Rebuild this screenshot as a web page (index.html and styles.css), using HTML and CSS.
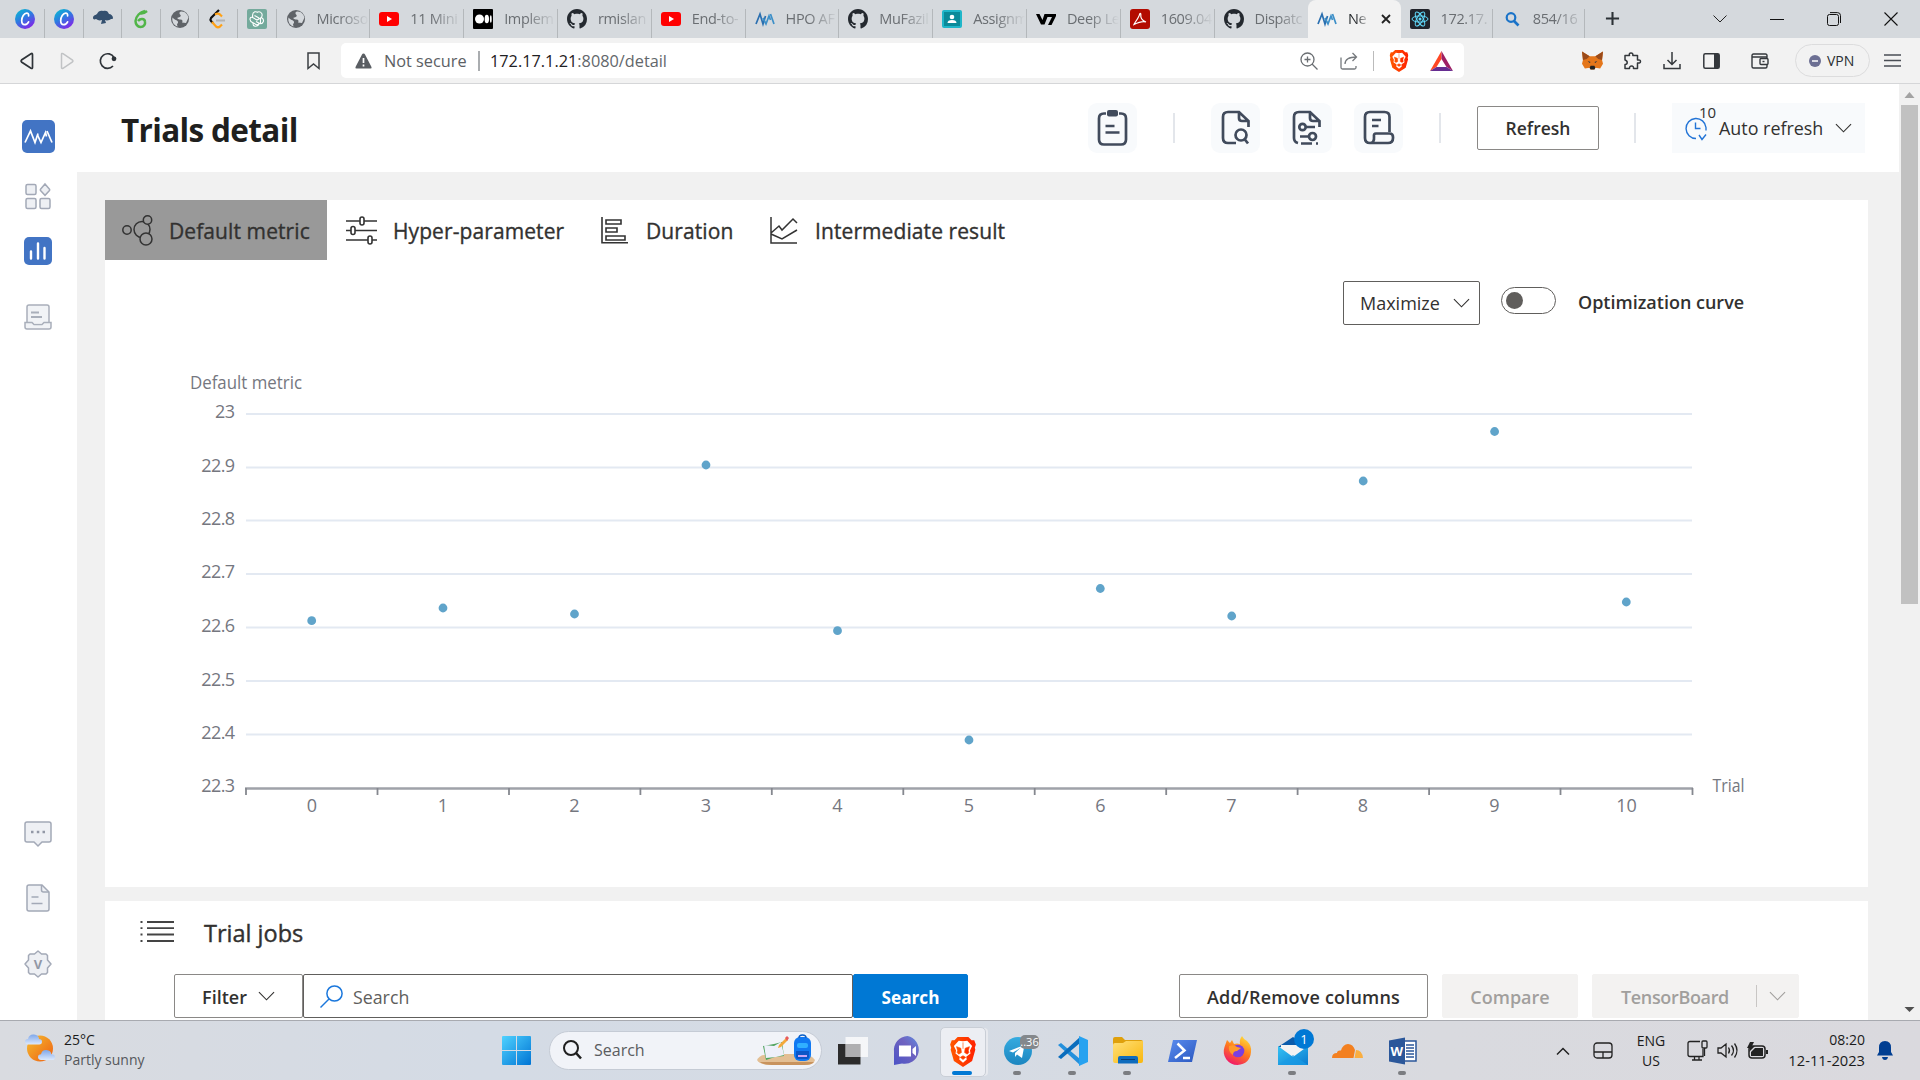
FILE: index.html
```html
<!DOCTYPE html>
<html lang="en">
<head>
<meta charset="utf-8">
<title>Neural Network Intelligence</title>
<link rel="stylesheet" href="styles.css">
</head>
<body>
<svg class="defs" aria-hidden="true">
  <defs>
    <linearGradient id="gCanva" x1="0" y1="0" x2="0.6" y2="1"><stop offset="0" stop-color="#05c3cf"/><stop offset=".5" stop-color="#2b7fe0"/><stop offset="1" stop-color="#7d2ae8"/></linearGradient>
    <linearGradient id="gWin" x1="0" y1="0" x2="1" y2="1"><stop offset="0" stop-color="#4fd2ff"/><stop offset="1" stop-color="#0074d4"/></linearGradient>
    <linearGradient id="gBrave" x1="0" x2="1"><stop offset="0" stop-color="#ff5a00"/><stop offset="1" stop-color="#ff2000"/></linearGradient>
    <linearGradient id="gSun" x1="0" y1="0" x2="1" y2="1"><stop offset="0" stop-color="#f5bd2f"/><stop offset="1" stop-color="#ee5f12"/></linearGradient>
    <linearGradient id="gCloud" x1="0" y1="0" x2="0" y2="1"><stop offset="0" stop-color="#7fa7ea"/><stop offset="1" stop-color="#dce9fd"/></linearGradient>
    <linearGradient id="gFox" x1="0.8" y1="0" x2="0.3" y2="1"><stop offset="0" stop-color="#ffe03b"/><stop offset=".5" stop-color="#ff7a1c"/><stop offset="1" stop-color="#f0156b"/></linearGradient>
    <linearGradient id="gTeams" x1="0" y1="1" x2="1" y2="0"><stop offset="0" stop-color="#4b53c6"/><stop offset=".6" stop-color="#6f63c0"/><stop offset="1" stop-color="#5f8be0"/></linearGradient>
    <linearGradient id="gMail" x1="0" y1="0" x2="1" y2="1"><stop offset="0" stop-color="#35c3f5"/><stop offset="1" stop-color="#0a7bd0"/></linearGradient>
    <linearGradient id="gFolder" x1="0" y1="0" x2="1" y2="1"><stop offset="0" stop-color="#ffe07a"/><stop offset="1" stop-color="#f9b70d"/></linearGradient>
    <linearGradient id="gPs" x1="0" y1="0" x2="1" y2="1"><stop offset="0" stop-color="#5b8def"/><stop offset="1" stop-color="#2a58c0"/></linearGradient>
    <linearGradient id="gTg" x1="0" y1="0" x2="0" y2="1"><stop offset="0" stop-color="#35abe0"/><stop offset="1" stop-color="#1c86c0"/></linearGradient>
    <symbol id="canva" viewBox="0 0 20 20"><circle cx="10" cy="10" r="10" fill="url(#gCanva)"/><path d="M13.6 6.8c.2-1.8-.6-2.7-1.9-2.7-2.600 0-5 4-5 7.500 0 2.600 1.200 4.100 2.900 4.100 1.800 0 3.200-1.300 4-2.900" fill="none" stroke="#fff" stroke-width="1.700" stroke-linecap="round"/></symbol>
    <symbol id="globe" viewBox="0 0 20 20"><circle cx="10" cy="10" r="9" fill="#5f6368"/><path d="M11 2.500c-2 .5-2 2.500-.5 3.500 1 1-1 2.500-2.500 2.500-1.500.5 0 2 2.500 2 2 0 2.500 1.500 1.500 3l4 .5 2.300-5C18.500 6 15 2 11 2.500zM2.500 8.500c1.500 2 4 2.500 5 3.500s.5 2.500-.5 3l.5 2.500C4 16.500 1.500 12.500 2.500 8.500z" fill="#d5d9dd"/></symbol>
    <symbol id="gh" viewBox="0 0 16 16"><path fill="#24292f" d="M8 0C3.580 0 0 3.580 0 8c0 3.540 2.290 6.530 5.470 7.590.4.070.55-.17.55-.38 0-.19-.01-.82-.01-1.490-2.010.37-2.530-.49-2.690-.94-.09-.23-.48-.94-.82-1.130-.28-.15-.68-.52-.01-.53.63-.01 1.080.58 1.230.82.72 1.210 1.870.87 2.330.66.070-.52.28-.87.51-1.070-1.780-.2-3.640-.89-3.640-3.950 0-.87.31-1.590.82-2.150-.08-.2-.36-1.020.08-2.120 0 0 .67-.21 2.200.82.64-.18 1.320-.27 2-.27s1.360.09 2 .27c1.530-1.040 2.200-.82 2.200-.82.44 1.100.16 1.920.08 2.120.51.56.82 1.270.82 2.150 0 3.070-1.870 3.750-3.650 3.950.29.25.54.73.54 1.480 0 1.070-.01 1.930-.01 2.200 0 .21.15.46.55.38A8.010 8.010 0 0016 8c0-4.420-3.580-8-8-8z"/></symbol>
    <symbol id="yt" viewBox="0 0 20 20"><rect y="3" width="20" height="14" rx="3" fill="#f00"/><path d="M8 7v6l5-3z" fill="#fff"/></symbol>
    <symbol id="nni" viewBox="0 0 20 20"><path d="M1 15 5 5l3 10 2.500-8" fill="none" stroke="#2a6fb0" stroke-width="1.700"/><path d="m8 9 3 6 3-8 1.500 4M15.500 5 19 15" fill="none" stroke="#3c8fc8" stroke-width="1.700"/></symbol>
    <symbol id="chev" viewBox="0 0 18 10"><path d="m1 1 8 8 8-8" fill="none" stroke="currentColor" stroke-width="1.200"/></symbol>
    <symbol id="lion" viewBox="0 0 24 28"><path d="M7 0h10l3 3 2.500 0L24 7l-1 3 .500 2-3 10.500L12 28l-8.500-5.500L.500 12 1 10 0 7l1.500-4H4z" fill="url(#gBrave)"/><path d="m12 4 4-.5 4.500 5-2 4 .5 3-4 3 .500 2.500L12 24l-3.500-3L9 18.500l-4-3 .500-3-2-4L8 3.500z" fill="#fff"/><path d="m6 9 4 1.500.5 4L8 16l-1.500-1.500.5-2zM18 9l-4 1.500-.5 4L16 16l1.500-1.500-.500-2zM12 5v6M9.500 19l2.500-1.500 2.500 1.500L12 21z" fill="url(#gBrave)" stroke="#ff4a00" stroke-width=".6"/></symbol>
  </defs>
</svg>

<header class="tabstrip">
  <div class="tab first"><svg class="fav"><use href="#canva"/></svg></div>
  <div class="tab mini"><svg class="fav"><use href="#canva"/></svg></div>
  <div class="tab mini"><svg class="fav" viewBox="0 0 20 20"><path d="M0 9c0-3 3-3 4-4 1-3 4-4 6-3 3-1 5 0 6 3 2 0 4 2 4 4 0 1-1 1-2 1-1 1-4 2-6 1l1 3-5 1 1-4c-3 1-4 0-6-1-2 1-3 0-3-1z" fill="#34506f"/></svg></div>
  <div class="tab mini"><svg class="fav" viewBox="0 0 20 20"><path d="M14 2C9 3 5 7 4.500 12c0 3 2 6 5 6 3.500 0 5-3 4.500-5.500-.5-3-4.500-3.500-7-.5M8 4c2 1 5 .5 8-2" fill="none" stroke="#51b548" stroke-width="2.500"/></svg></div>
  <div class="tab mini"><svg class="fav"><use href="#globe"/></svg></div>
  <div class="tab mini"><svg class="fav" viewBox="0 0 20 20"><path d="m11 1-8 8q-1 1.500 0 3l2 2" fill="none" stroke="#111" stroke-width="2.200"/><path d="m4 13 4 4.500q2 1.500 4 0l2-2M7 5.500l1-.5q2-1 4 .5l2 2" fill="none" stroke="#ffa116" stroke-width="2.200"/><path d="M8 11.500h9" stroke="#b3b3b3" stroke-width="2"/></svg></div>
  <div class="tab mini"><svg class="fav" viewBox="0 0 20 20"><rect width="20" height="20" rx="2" fill="#74aa9c"/><g fill="none" stroke="#fff" stroke-width="1.100"><path d="M10 3.200q3-1.200 4.600 1 1.200 2-.2 4.300L10 11 5.600 8.500V6q0-2.400 2.200-3.200 1.700-.4 3 .8M14.400 8.500q2.600 1.500 2 4-.8 2.300-3.300 2.300L9 12.500M5.600 8.500Q3 7.500 3 10.500q.2 2 2.500 3l4.500 2.500 3.500-2V9.500M6 13.500q-.5 3 2 3.700 2.500.3 3.800-1.500M7.500 6.500 12 9"/></g></svg></div>
  <div class="tab"><svg class="fav"><use href="#globe"/></svg><span>Microso</span></div>
  <div class="tab"><svg class="fav"><use href="#yt"/></svg><span>11 Mini</span></div>
  <div class="tab"><svg class="fav" viewBox="0 0 20 20"><rect width="20" height="20" rx="1"/><circle cx="6.500" cy="10" r="4.500" fill="#fff"/><ellipse cx="13.800" cy="10" rx="2.200" ry="4.300" fill="#fff"/><ellipse cx="17.800" cy="10" rx=".9" ry="3.800" fill="#fff"/></svg><span>Implem</span></div>
  <div class="tab"><svg class="fav"><use href="#gh"/></svg><span>rmislan</span></div>
  <div class="tab"><svg class="fav"><use href="#yt"/></svg><span>End-to-</span></div>
  <div class="tab"><svg class="fav"><use href="#nni"/></svg><span>HPO AF</span></div>
  <div class="tab"><svg class="fav"><use href="#gh"/></svg><span>MuFazil</span></div>
  <div class="tab"><svg class="fav" viewBox="0 0 20 20"><rect y="1" width="20" height="18" rx="2" fill="#1fb6c9"/><rect x="2" y="3" width="16" height="14" fill="#0b8a99"/><circle cx="10" cy="8" r="2.300" fill="#fff"/><path d="M5.500 14q0-3 4.500-3t4.500 3z" fill="#fff"/></svg><span>Assignm</span></div>
  <div class="tab"><svg class="fav" viewBox="0 0 20 20"><path d="M0 5h3.500l3 6 2-6H20v2l-4.500 9H12l4-8h-4.500l-3 7.500H5z"/></svg><span>Deep Le</span></div>
  <div class="tab"><svg class="fav" viewBox="0 0 20 20"><rect width="20" height="20" rx="3" fill="#b30b00"/><path d="M4 15.500c1-2.500 5-7 5.500-10 .2-1.500 1.500-1.500 1.300 0-.5 4 2.500 6.500 5.200 7.500-3-1-8 .5-12 2.500z" fill="none" stroke="#fff" stroke-width="1.200"/></svg><span>1609.04</span></div>
  <div class="tab nosep"><svg class="fav"><use href="#gh"/></svg><span>Dispatc</span></div>
  <div class="tab active"><svg class="fav"><use href="#nni"/></svg><span>Ne</span><svg class="tab-x" viewBox="0 0 10 10"><path d="m1 1 8 8M9 1 1 9" stroke="#222" stroke-width="1.800"/></svg></div>
  <div class="tab late"><svg class="fav" viewBox="0 0 20 20"><rect width="20" height="20" rx="2" fill="#20232a"/><g fill="none" stroke="#61dafb" stroke-width="1"><ellipse cx="10" cy="10" rx="8" ry="3.100"/><ellipse cx="10" cy="10" rx="8" ry="3.100" transform="rotate(60 10 10)"/><ellipse cx="10" cy="10" rx="8" ry="3.100" transform="rotate(120 10 10)"/></g><circle cx="10" cy="10" r="1.500" fill="#61dafb"/></svg><span>172.17.</span></div>
  <div class="tab late"><svg class="fav" viewBox="0 0 20 20"><circle cx="9" cy="8.500" r="4.300" fill="none" stroke="#1a73c8" stroke-width="2.200"/><path d="m12 12 4.500 4.500" stroke="#1a73c8" stroke-width="2.600"/></svg><span>854/16</span></div>
  <svg class="plus" viewBox="0 0 16 16"><path d="M8 1v14M1 8h14" stroke="#2c3236" stroke-width="2.200"/></svg>
  <div class="wincontrols">
    <svg width="14" height="8" viewBox="0 0 14 8"><path d="m.5.5 6.500 6.500L13.500.5" fill="none" stroke="#222"/></svg>
    <svg width="14" height="14" viewBox="0 0 14 14"><path d="M0 7.500h14" stroke="#111"/></svg>
    <svg width="14" height="14" viewBox="0 0 14 14"><rect x=".5" y="2.500" width="11" height="11" rx="2" fill="none" stroke="#111"/><path d="M3 .6h7.500q3 0 3 3V11" fill="none" stroke="#111"/></svg>
    <svg width="14" height="14" viewBox="0 0 14 14"><path d="m.5.5 13 13m0-13-13 13" stroke="#111" stroke-width="1.100"/></svg>
  </div>
</header>

<div class="toolbar">
  <svg class="back" width="14" height="18" viewBox="0 0 14 18"><path d="M12.500 2.500v13q0 1.500-1.500.8L1.500 10q-1-1 0-2L11 1.700q1.500-.8 1.500.8z" fill="none" stroke="#2f3439" stroke-width="1.700"/></svg>
  <svg class="fwd" width="14" height="18" viewBox="0 0 14 18"><path d="M1.500 2.500v13q0 1.500 1.500.8l9.500-6.300q1-1 0-2L3 1.700q-1.500-.8-1.500.8z" fill="none" stroke="#c1c3c5" stroke-width="1.500"/></svg>
  <svg class="reload" width="18" height="18" viewBox="0 0 18 18"><path d="M14 14A7.300 7.300 0 1 1 15 5.500" fill="none" stroke="#2f3439" stroke-width="1.700"/><circle cx="15" cy="6.800" r="2.400" fill="#2f3439"/></svg>
  <svg class="bookmark" width="13" height="18" viewBox="0 0 13 18"><path d="M1 1h11v15.500L6.500 12 1 16.500z" fill="none" stroke="#3b3f43" stroke-width="1.500"/></svg>
  <div class="urlbar">
    <svg class="warn" width="17" height="16" viewBox="0 0 17 16"><path d="M8.500.5q1 0 1.500 1L16.500 14q.5 1.500-1 1.500h-14q-1.500 0-1-1.500L7 1.500q.5-1 1.500-1z" fill="#5a5e63"/><path d="M8.500 5v5M8.500 11.500v2" stroke="#fff" stroke-width="1.700"/></svg>
    <span class="notsec">Not secure</span><i class="urlsep"></i>
    <span class="url"><b>172.17.1.21</b>:8080/detail</span>
    <svg class="zoomi" width="18" height="18" viewBox="0 0 18 18"><g fill="none" stroke="#6a6e72" stroke-width="1.300"><circle cx="7.500" cy="7.500" r="6.500"/><path d="m12 12 5.500 5.500M4.500 7.500h6M7.500 4.500v6"/></g></svg>
    <svg class="share" width="18" height="18" viewBox="0 0 18 18"><g fill="none" stroke="#75797d" stroke-width="1.300"><path d="M1 5.500v10q0 1.500 1.500 1.500h12q1.500 0 1.500-1.500V14M5 12q0-7 11.500-7M12.500 1l4 4-4 4"/></g></svg>
    <i class="vsep"></i>
    <svg class="lion" width="20" height="22" viewBox="0 0 24 28"><use href="#lion"/></svg>
    <svg class="bat" width="23" height="20" viewBox="0 0 23 20"><path d="M11.500 0 0 20l6.500-4 5-8z" fill="#ff4724"/><path d="m11.500 0 11.500 20-6.500-4-5-8z" fill="#9e1f63"/><path d="M0 20h23l-6.500-4h-10z" fill="#662d91"/></svg>
  </div>
  <svg class="metamask" width="21" height="19" viewBox="0 0 22 19"><path d="m0 0 8 5h6l8-5-1 9 1 4-3 5-5-1-1 2H9l-1-2-5 1-3-5 1-4z" fill="#e4761b"/><path d="m0 0 8 5-3 3-4 1zM22 0l-8 5 3 3 4 1z" fill="#9a4a1a"/><path d="m8 17 1-2h4l1 2-1 2H9z" fill="#222"/><path d="m6 10 3 1-1 1zM16 10l-3 1 1 1z" fill="#233447"/></svg>
  <svg class="puzzle" width="19" height="18" viewBox="0 0 19 18"><path d="M2 3.500h4.500q-.8-2.500 1.500-2.500t1.800 2.500h4.700V8q3-.5 3 1.500t-3 1.500V16.500h-4q.3-2.500-1.900-2.500T6.500 16.500H2v-4q2.200 0 2.200-2T2 8z" fill="none" stroke="#34383c" stroke-width="1.500" stroke-linejoin="round"/></svg>
  <svg class="dl" width="18" height="18" viewBox="0 0 18 18"><path d="M9 0v12M4.500 8 9 12.500 13.500 8M1 12v4.500h16V12" fill="none" stroke="#34383c" stroke-width="1.500"/></svg>
  <svg class="panel" width="17" height="16" viewBox="0 0 17 16"><rect x=".8" y=".8" width="15.400" height="14.400" rx="1.500" fill="none" stroke="#34383c" stroke-width="1.500"/><path d="M11 1h5v14h-5z" fill="#34383c"/></svg>
  <svg class="wallet" width="18" height="16" viewBox="0 0 18 16"><g fill="none" stroke="#34383c" stroke-width="1.400"><path d="M16 4.500V2.500Q16 1 14.500 1h-12Q1 1 1 2.500v11Q1 15 2.500 15h12q1.500 0 1.500-1.500V12M1 4h14q1 0 1 1"/><rect x="9" y="5.500" width="8" height="6" rx="1"/><path d="M11.500 8.500h2"/></g></svg>
  <div class="vpn"><svg width="12" height="12" viewBox="0 0 12 12"><circle cx="6" cy="6" r="6" fill="#6c6f93"/><path d="M3 6h6" stroke="#fff" stroke-width="1.500"/></svg><span>VPN</span></div>
  <svg class="menu" width="17" height="13" viewBox="0 0 17 13"><path d="M0 1h17M0 6.500h17M0 12h17" stroke="#4a4e55" stroke-width="1.500"/></svg>
</div>

<main class="viewport">
  <nav class="sidebar">
    <svg class="s-logo" width="33" height="33" viewBox="0 0 33 33"><rect width="33" height="33" rx="5" fill="#4274c4"/><path d="m3 22.500 5.500-11.500L13 22.500l3-9" fill="none" stroke="#fff" stroke-width="1.700"/><path d="m15.500 15 3.500 7.500 4.500-10 1 4M25 11l5 11.500" fill="none" stroke="#fff" stroke-width="1.700"/></svg>
    <svg class="s-grid" width="26" height="27" viewBox="0 0 26 27"><g fill="#eef0f4" stroke="#a3a9b7" stroke-width="1.500"><rect x="1" y="1.500" width="10" height="10" rx="1.500"/><rect x="1" y="15.500" width="10" height="10" rx="1.500"/><rect x="15" y="15.500" width="10" height="10" rx="1.500"/><path d="m20 1 4.500 5.300q.5.700 0 1.200L20 12.300 15.500 7.500q-.5-.5 0-1.200z"/></g></svg>
    <svg class="s-bars" width="28" height="28" viewBox="0 0 28 28"><rect width="28" height="28" rx="5" fill="#4274c4"/><path d="M7 14.500v7M14 6.500v15M20.500 11v10.500" stroke="#fff" stroke-width="2.400" stroke-linecap="round"/></svg>
    <svg class="s-inbox" width="28" height="26" viewBox="0 0 28 26"><g fill="#f1f3f6" stroke="#a9afba" stroke-width="1.500"><path d="M3 19V3q0-2 2-2h18q2 0 2 2v16"/><path d="M1 18.500h7l2 2h8l2-2h7V23q0 2-2 2H3q-2 0-2-2z"/><path d="M7 8.500h8M7 13h11" stroke-width="1.800"/></g></svg>
    <svg class="s-chat" width="28" height="26" viewBox="0 0 28 26"><path d="M3 1h22q2 0 2 2v16q0 2-2 2h-7l-4 4-4-4H3q-2 0-2-2V3q0-2 2-2z" fill="#eef0f4" stroke="#a3a9b7" stroke-width="1.500"/><path d="M7 11h2.500M12.800 11h2.500M18.500 11H21" stroke="#9298a6" stroke-width="2.500"/></svg>
    <svg class="s-doc" width="24" height="28" viewBox="0 0 24 28"><path d="M3 1h13l7 7v17q0 2-2 2H3q-2 0-2-2V3q0-2 2-2z" fill="#eef0f4" stroke="#a3a9b7" stroke-width="1.500"/><path d="M15.500 1v5q0 2 2 2H23M5.500 13h7M5.500 19.500h11" fill="none" stroke="#a3a9b7" stroke-width="1.500"/></svg>
    <div class="s-v"><svg width="28" height="28" viewBox="0 0 28 28"><path d="m14 1 3.500 3H22l1.500 1.500V10L27 14l-3.500 4v4.500L22 24h-4.500L14 27l-3.500-3H6l-1.500-1.500V18L1 14l3.500-4V5.500L6 4h4.500z" fill="#eef0f4" stroke="#a3a9b7" stroke-width="1.500" stroke-linejoin="round"/></svg><b>V</b></div>
  </nav>
  <div class="page">
    <div class="pagehead">
      <h1>Trials detail</h1>
      <div class="actions">
        <div class="ibtn"><svg width="32" height="37" viewBox="0 0 32 37"><g fill="none" stroke="#414b5c" stroke-width="2.700"><path d="M9 3.500H7Q2 3.500 2 8.500v21q0 5 5 5h17q5 0 5-5v-21q0-5-5-5h-2"/><path d="M8.500 16h9M8.500 22.500h14"/></g><rect x="10" y="0" width="11" height="6.500" rx="2" fill="#414b5c"/></svg></div>
        <i class="hsep"></i>
        <div class="ibtn"><svg width="30" height="36" viewBox="0 0 30 36"><g fill="none" stroke="#414b5c" stroke-width="2.700"><path d="M15 33H7q-5 0-5-5V7q0-5 5-5h11l9.500 9v6M18 2v6q0 3 3 3h6"/><circle cx="20" cy="25" r="5.500"/><path d="m23.500 29 3.500 4.500"/></g></svg></div>
        <div class="ibtn b2"><svg width="30" height="36" viewBox="0 0 30 36"><g fill="none" stroke="#414b5c" stroke-width="2.700"><path d="M6 33Q2 32 2 28V7q0-5 5-5h11l9.500 9v6M18 2v6q0 3 3 3h6M14 17h9M8 26.500h8"/><circle cx="10.500" cy="17" r="3.200"/><circle cx="20.500" cy="26.500" r="3.500"/><path d="M9 33.500h11M24 33.500h2"/></g></svg></div>
        <div class="ibtn b2"><svg width="32" height="36" viewBox="0 0 32 36"><g fill="none" stroke="#414b5c" stroke-width="2.700"><path d="M26.500 22V7q0-5-5-5H7Q2 2 2 7v21q0 5 5 5h18q5 0 5-5v-1q0-3.500-3.500-3.500H13q-2.500 0-2 3 .500 6.500-4 6.500M9 10h9M9 16h6.500"/></g></svg></div>
        <i class="hsep"></i>
        <div class="btn refresh">Refresh</div>
        <i class="hsep last"></i>
        <div class="auto">
          <svg width="23" height="23" viewBox="0 0 23 23"><path d="M11 21.500A10 10 0 1 1 21 10.500v3M14 18l3 4.500 4-5M10.500 5.500v6h5" fill="none" stroke="#2374d6" stroke-width="1.400"/></svg>
          <em>10</em><span>Auto refresh</span><svg class="chev" width="17" height="10"><use href="#chev"/></svg>
        </div>
      </div>
    </div>

    <section class="card metric">
      <div class="pivot">
        <div class="pv sel"><svg width="31" height="31" viewBox="0 0 31 31"><g fill="none" stroke="#333" stroke-width="1.500"><circle cx="5" cy="15" r="4.200"/><circle cx="20" cy="14.500" r="8"/><circle cx="25.500" cy="5" r="4.200" fill="#999"/><circle cx="24" cy="24" r="6" fill="#999"/></g></svg><span>Default metric</span></div>
        <div class="pv p2"><svg width="31" height="29" viewBox="0 0 31 29"><g fill="#fff" stroke="#333" stroke-width="1.600"><path d="M0 5h31M0 14.500h31M0 24h31"/><rect x="14" y="1" width="4" height="8" rx="2"/><rect x="5" y="10.500" width="4" height="8" rx="2"/><rect x="22" y="20" width="4" height="8" rx="2"/></g></svg><span>Hyper-parameter</span></div>
        <div class="pv p3"><svg width="27" height="27" viewBox="0 0 27 27"><g fill="none" stroke="#333" stroke-width="1.600"><path d="M1 0v25.800h26"/><path d="M5 3h15v4H5zM5 11h11v4H5zM5 19h19v4H5z"/></g></svg><span>Duration</span></div>
        <div class="pv p4"><svg width="27" height="27" viewBox="0 0 27 27"><g fill="none" stroke="#333" stroke-width="1.500"><path d="M1 0v26h26M1 16l8-7 3 4L23 2l4 4M1 17l11 5 15-9"/></g></svg><span>Intermediate result</span></div>
      </div>
      <div class="controls">
        <div class="select"><span>Maximize</span><svg width="17" height="10"><use href="#chev"/></svg></div>
        <div class="toggle"><i></i></div>
        <span class="optlabel">Optimization curve</span>
      </div>
      <svg class="chart" viewBox="105 345 1763 500" width="1763" height="500">
        <g stroke="#e3e9f2" stroke-width="2"><path d="M246 414h1446M246 467.500h1446M246 520.500h1446M246 574h1446M246 627.500h1446M246 681h1446M246 734.500h1446"/></g>
        <path d="M245 788.500h1448" stroke="#9fa2a9" stroke-width="2.500"/>
        <path d="M246 788v7M377.500 788v7M509 788v7M640.400 788v7M771.800 788v7M903.300 788v7M1034.700 788v7M1166.200 788v7M1297.600 788v7M1429.100 788v7M1560.500 788v7M1692.500 788v7" stroke="#85888f" stroke-width="1.800"/>
        <g class="ylab"><text x="234.500" y="418">23</text><text x="234.500" y="471.500">22.9</text><text x="234.500" y="524.500">22.8</text><text x="234.500" y="578">22.7</text><text x="234.500" y="632">22.6</text><text x="234.500" y="685.500">22.5</text><text x="234.500" y="738.500">22.4</text><text x="234.500" y="792">22.3</text></g>
        <g class="xlab"><text x="312" y="812">0</text><text x="443" y="812">1</text><text x="574.500" y="812">2</text><text x="706" y="812">3</text><text x="837.500" y="812">4</text><text x="969" y="812">5</text><text x="1100.500" y="812">6</text><text x="1231.500" y="812">7</text><text x="1363" y="812">8</text><text x="1494.500" y="812">9</text><text x="1626.500" y="812">10</text></g>
        <g class="names"><text x="190" y="388.500" textLength="112" lengthAdjust="spacingAndGlyphs">Default metric</text><text x="1712.500" y="792" textLength="32" lengthAdjust="spacingAndGlyphs">Trial</text></g>
        <g fill="#60a4ca"><circle cx="311.700" cy="620.700" r="4.400"/><circle cx="443" cy="608" r="4.400"/><circle cx="574.500" cy="614" r="4.400"/><circle cx="706" cy="465" r="4.400"/><circle cx="837.500" cy="630.700" r="4.400"/><circle cx="969" cy="740" r="4.400"/><circle cx="1100.300" cy="588.500" r="4.400"/><circle cx="1231.700" cy="616" r="4.400"/><circle cx="1363.200" cy="481" r="4.400"/><circle cx="1494.600" cy="431.500" r="4.400"/><circle cx="1626.300" cy="602" r="4.400"/></g>
      </svg>
    </section>

    <section class="card jobs">
      <div class="jobtitle"><svg width="34" height="23" viewBox="0 0 34 23"><path d="M7 2h27M7 8.200h27M7 14.500h27M7 21h27M.5 2h2M.5 8.200h2M.5 14.500h2M.5 21h2" stroke="#444" stroke-width="1.800"/></svg><span>Trial jobs</span></div>
      <div class="jobbar">
        <div class="btn filter"><span>Filter</span><svg width="17" height="10"><use href="#chev"/></svg></div>
        <div class="searchbox"><svg width="23" height="23" viewBox="0 0 23 23"><circle cx="14.500" cy="8.500" r="7.600" fill="none" stroke="#1a77dc" stroke-width="1.500"/><path d="M9 14 .5 22.500" stroke="#1a77dc" stroke-width="1.500"/></svg><span>Search</span></div>
        <div class="btn go"><span>Search</span></div>
        <div class="btn addrem"><span>Add/Remove columns</span></div>
        <div class="btn off compare"><span>Compare</span></div>
        <div class="btn off tb"><span>TensorBoard</span><i></i><svg width="17" height="10"><use href="#chev"/></svg></div>
      </div>
    </section>
  </div>
  <div class="scroll"><svg width="21" height="21" viewBox="0 0 21 21"><path d="m5.500 14 5-6 5 6z" fill="#a3a3a3"/></svg><i></i><svg class="dn" width="21" height="21" viewBox="0 0 21 21"><path d="m5.500 8 5 5 5-5z" fill="#505050"/></svg></div>
</main>

<footer class="taskbar">
  <svg class="weather" width="30" height="29" viewBox="0 0 30 29"><circle cx="15" cy="14.500" r="13" fill="url(#gSun)"/><path d="M3 10.500q-3-.5-3-3T3 5Q4 0 9 0.500T14 5q3 0 3 2.800T14 10.500z" fill="url(#gCloud)"/><path d="M16 26q-3-.5-3-3t3-2.700Q17 15.500 21.500 16t4.800 4.200q3.700 0 3.700 3T27 26z" fill="url(#gCloud)"/></svg>
  <div class="wtext"><span>25°C</span><span class="dim">Partly sunny</span></div>
  <svg class="win" width="29" height="29" viewBox="0 0 29 29"><path d="M0 1q0-1 1-1h13v14H0zM15 0h13q1 0 1 1v13H15zM0 15h14v14H1q-1 0-1-1zM15 15h14v13q0 1-1 1H15z" fill="url(#gWin)"/></svg>
  <div class="tsearch">
    <svg width="19" height="20" viewBox="0 0 19 20"><circle cx="8" cy="8" r="7" fill="none" stroke="#1f1f1f" stroke-width="2"/><path d="m13 13 5 5.500" stroke="#1f1f1f" stroke-width="2.600"/></svg>
    <span>Search</span>
    <svg class="illus" width="58" height="32" viewBox="0 0 58 32"><path d="M0 26q3-6 14-6h30q10 0 14 6-1 5-10 5H14Q3 31 0 26z" fill="#e3bf94"/><path d="M3 28q3 3 12 3h32q8 0 10-3z" fill="#c8935e"/><path d="m6 12 11-2 8-2 2 14-9 1-9 3z" fill="#4fa35c"/><path d="m7 11 10 1 2 11-10 1zM17 12l7-4 3 13-8 2z" fill="#eef0fa"/><path d="m22 11 7-7 2 2-7 7-3 1z" fill="#f4a93a"/><path d="m28 4 2-2 2 2-2 3z" fill="#e85b5b"/><rect x="37" y="3" width="17" height="24" rx="6" fill="#1179f2"/><path d="M42 4q0-3 3.500-3T49 4" fill="none" stroke="#0b5fc8" stroke-width="1.500"/><rect x="40" y="9" width="11" height="5" rx="2" fill="#31b0ff"/><path d="M39 17h13v6q0 2-2 2h-9q-2 0-2-2z" fill="#0b56c7"/><path d="M41 22h9" stroke="#c8a6f5" stroke-width="2"/></svg>
  </div>
  <div class="apps">
    <div class="app"><svg width="30" height="30" viewBox="0 0 30 30"><path d="M0 8h22.500v20.500H0z" fill="#2c2c2c"/><path d="M7.500 1H30v20H7.500z" fill="#fff" opacity=".75"/><path d="M7.500 8h15v13h-15z" fill="#a5a6a8" opacity=".75"/></svg></div>
    <div class="app"><svg width="29" height="29" viewBox="0 0 29 29"><path d="M14.500 0A14 14 0 1 1 9 27.500L1 29V16A14 14 0 0 1 14.500 0z" fill="url(#gTeams)"/><path d="M6 9.500h12v11H6zM19.500 13l3.500-3v10l-3.500-3z" fill="#fff"/></svg></div>
    <div class="app on"><svg width="26" height="30"><use href="#lion"/></svg><u class="wide"></u></div>
    <div class="app"><svg width="28" height="28" viewBox="0 0 28 28"><circle cx="14" cy="14" r="14" fill="url(#gTg)"/><path d="m5 14 15.500-6L18 21l-5-3.500-2 2.500v-4l6-5.500-8 5z" fill="#fff"/></svg><small>..36</small><u></u></div>
    <div class="app"><svg width="30" height="30" viewBox="0 0 30 30"><path d="m0 9 3-2 19 16v6z" fill="#2490dc"/><path d="m0 21 3 2L22 7V1z" fill="#0a6dbd"/><path d="m21 0 9 4v22l-9 4z" fill="#27a2f0"/></svg><u></u></div>
    <div class="app"><svg width="30" height="27" viewBox="0 0 30 27"><path d="M0 2q0-2 2-2h7l3 3h16q2 0 2 2v6H0z" fill="#dfa00c"/><path d="M0 8q0-2 2-2h8l3-2h17v20q0 2-2 2H2q-2 0-2-2z" fill="url(#gFolder)"/><path d="M5 21q0-2 2-2h16q2 0 2 2v5.500H5z" fill="#0f6cbd"/><path d="M8 22.500h14" stroke="#0a3f75"/></svg><u></u></div>
    <div class="app"><svg width="29" height="22" viewBox="0 0 29 22"><path d="M5 0h24l-5 22H0z" fill="url(#gPs)"/><path d="m9.500 3.500 7 7L7 18M15 18h7" fill="none" stroke="#fff" stroke-width="2.500"/></svg></div>
    <div class="app"><svg width="29" height="29" viewBox="0 0 29 29"><path d="M14.500 29A14 13.500 0 0 1 1.500 11L4 4l3 3 2-3 2 4q3-1 6 0-1-4 2-8 2 4 5 5 5 5 4 11-1 12-13.500 13z" fill="url(#gFox)"/><circle cx="15" cy="15" r="6.300" fill="#7a3fe0"/><path d="M6 10q5-2 8 1l4 1-4 3q-4 0-4 4-5-3-4-9z" fill="#ff9a2a"/></svg></div>
    <div class="app"><svg width="30" height="28" viewBox="0 0 30 28"><path d="M0 10 15 0l15 10z" fill="#0b5cab"/><path d="M3 8h24v12H3z" fill="#f3f3f3"/><path d="m0 9 15 11L30 9v19H0z" fill="url(#gMail)"/><path d="m0 28 15-10 15 10z" fill="#1a9be6" opacity=".7"/></svg><strong>1</strong><u></u></div>
    <div class="app"><svg width="31" height="14" viewBox="0 0 31 14"><path d="M0 14q0-5 5-5 0-3 4-2.500Q11 0 16 0t7 6l-1.500 8z" fill="#f38020"/><path d="M22.500 14 24 6q6 0 7 8z" fill="#faae40"/></svg></div>
    <div class="app"><div class="word"><b>W</b><svg width="28" height="28" viewBox="0 0 28 28"><path d="M15 4h12v20H15z" fill="#fff" stroke="#2b579a" stroke-width="1.500"/><path d="M17 8h8M17 11h8M17 14h8M17 17h8M17 20h8" stroke="#2b579a" stroke-width="1.500"/><path d="m0 3.500 16-3v27l-16-3z" fill="#2b579a"/></svg></div><u></u></div>
  </div>
  <div class="tray">
    <svg width="14" height="8" viewBox="0 0 14 8"><path d="m1 7.500 6-6 6 6" fill="none" stroke="#222" stroke-width="1.500"/></svg>
    <svg class="t2" width="20" height="17" viewBox="0 0 20 17"><g fill="none" stroke="#222" stroke-width="1.300"><rect x="1" y="1" width="18" height="15" rx="3"/><path d="M1 10h18M10 10v6"/></g></svg>
    <div class="lang"><span>ENG</span><span>US</span></div>
    <svg class="t3" width="21" height="21" viewBox="0 0 21 21"><g fill="none" stroke="#222" stroke-width="1.300"><path d="M13 1.500H3q-2 0-2 2v11q0 2 2 2h13V9M5 20h10M7.500 17v3M12 17v3"/><rect x="15" y="1" width="5" height="7" rx="1"/><path d="M17.500 8v8"/></g></svg>
    <svg class="t4" width="21" height="17" viewBox="0 0 21 17"><g fill="none" stroke="#222" stroke-width="1.300"><path d="M1 6v5h3l5 4V2L4 6zM11.500 5.500q2 3 0 6M14.500 3.500q4 5 0 10M17.500 1.500q5 7 0 14"/></g></svg>
    <svg class="t5" width="21" height="17" viewBox="0 0 21 17"><rect x="2" y="4" width="16" height="12" rx="3" fill="none" stroke="#222" stroke-width="1.500"/><path d="M8 6h8v8H4v-4zM19 8h2v4h-2zM3 0l-3 6h3l-1 4 6-6H5l2-4z" fill="#222"/></svg>
    <div class="clock"><span>08:20</span><span class="date">12-11-2023</span></div>
    <svg class="bell" width="16" height="19" viewBox="0 0 16 19"><path d="M8 0q6 0 6 6.500V11l2 3.500H0L2 11V6.500Q2 0 8 0zM5 16h6q-.5 3-3 3t-3-3z" fill="#003e92"/></svg>
  </div>
</footer>
</body>
</html>
```
FILE: styles.css
```css
* { box-sizing: border-box; }
body { margin: 0; width: 1920px; height: 1080px; overflow: hidden; font-family: "Open Sans", "Noto Sans", sans-serif; color: #323130; background: #fff; display: flex; flex-direction: column; }
svg { display: block; flex: none; overflow: visible; }
span { white-space: nowrap; }
.defs { position: absolute; width: 0; height: 0; }

/* Browser tab strip */
.tabstrip { height: 38px; background: #d5d9dd; display: flex; flex: none; }
.tab { width: 93.8px; flex: none; padding: 9px 0 0 9px; display: flex; background: linear-gradient(#b4b8bb, #b4b8bb) right bottom / 1px 29px no-repeat; }
.tab.first { width: 45px; padding-left: 15px; }
.tab.mini { width: 38.6px; }
.tab.nosep { background: none; width: 93.500px; }
.tab.late { width: 92.200px; }
.tab.active { background: #f2f2f2; border-radius: 8px 8px 0 0; width: 92.500px; }
.fav { width: 20px; height: 20px; }
.tab span { margin-left: 11px; flex: none; font-size: 14.500px; letter-spacing: -0.35px; line-height: 20px; color: #6a6e72; -webkit-mask-image: linear-gradient(90deg, #000 22px, transparent 52px); mask-image: linear-gradient(90deg, #000 22px, transparent 52px); }
.tab.active span { width: 19px; color: #25292c; -webkit-mask-image: linear-gradient(90deg, #000 40%, transparent 115%); mask-image: linear-gradient(90deg, #000 40%, transparent 115%); }
.tab-x { width: 10px; height: 10px; margin: 5px 0 0 14px; }
.plus { width: 15px; height: 15px; margin: 11px 0 0 20px; }
.wincontrols { margin: 0 22px 0 auto; display: flex; gap: 43px; align-items: center; }

/* Address toolbar */
.toolbar { height: 46px; flex: none; background: #f2f2f2; border-bottom: 1px solid #d5d6d8; display: flex; align-items: center; }
.back { margin-left: 20px; } .fwd { margin-left: 26px; } .reload { margin-left: 25px; } .bookmark { margin-left: 190px; }
.urlbar { margin-left: 21px; width: 1123px; height: 35px; background: #fff; border-radius: 5px; display: flex; align-items: center; padding-left: 14px; font-size: 16.300px; }
.notsec { margin-left: 12px; width: 83px; color: #5c6064; }
.urlsep { width: 2px; height: 20px; background: #aaadb0; margin: 0 10px 0 11px; }
.url { color: #63676b; width: 177px; }
.url b { font-weight: 400; color: #1f2123; }
.zoomi { margin-left: auto; } .share { margin-left: 22px; }
.vsep { width: 1px; height: 20px; background: #bbb; margin: 0 15px; }
.bat { margin: 0 11px 0 21px; }
.metamask { margin-left: 118px; } .puzzle { margin-left: 20px; } .dl { margin-left: 21px; } .panel { margin-left: 22px; } .wallet { margin-left: 31px; }
.vpn { margin-left: 26px; width: 75px; height: 33px; border: 1px solid #dcdcdd; border-radius: 17px; display: flex; align-items: center; padding-left: 13px; font-size: 14px; color: #2b2e31; }
.vpn span { margin-left: 6px; }
.menu { margin-left: 14px; }

/* Page viewport */
.viewport { height: 936px; flex: none; display: flex; overflow: hidden; background: #f1f1f1; }
.sidebar { width: 77px; background: #fff; display: flex; flex-direction: column; align-items: center; flex: none; padding-right: 1px; }
.s-logo { margin-top: 36px; } .s-grid { margin-top: 30px; } .s-bars { margin-top: 27px; } .s-inbox { margin-top: 39px; }
.s-chat { margin-top: 491px; } .s-doc { margin-top: 37px; }
.s-v { margin-top: 38px; display: grid; place-items: center; }
.s-v > * { grid-area: 1 / 1; }
.s-v b { font-size: 13px; line-height: 28px; color: #9298a6; }
.page { width: 1822px; flex: none; }
.pagehead { height: 88px; background: #fff; display: flex; padding: 0 34px 0 44px; align-items: center; }
h1 { margin: 3px 0 0; font-size: 31.500px; letter-spacing: -0.65px; line-height: 44px; font-weight: 700; color: #201f1e; white-space: nowrap; }
.actions { display: flex; align-items: center; margin: 0 0 0 auto; }
.ibtn { width: 49px; height: 50px; border-radius: 9px; background: #f8fafc; display: grid; place-items: center; }
.ibtn.b2 { margin-left: 22.500px; }
.hsep { width: 2px; height: 30px; background: #e3e6eb; margin: 0 36px; }
.hsep.last { margin-left: 35px; }
.btn { height: 44px; border: 1px solid #8a8886; border-radius: 2px; background: #fff; font-size: 18px; font-weight: 600; display: flex; align-items: center; justify-content: center; }
.refresh { width: 122px; font-size: 17.500px; }
.auto { width: 193px; height: 50px; background: #f8fafc; display: flex; align-items: center; padding-left: 13px; font-size: 17.900px; position: relative; }
.auto em { position: absolute; left: 27px; top: -1px; font-style: normal; font-size: 15px; line-height: 20px; }
.auto span { margin-left: 11px; width: 104px; }
.auto .chev { margin-left: 12px; }

.card { width: 1763px; margin-left: 28px; background: #fff; }
.metric { margin-top: 28px; height: 687px; }
.pivot { height: 60px; display: flex; font-size: 21px; letter-spacing: 0.09px; }
.pv { display: flex; align-items: center; -webkit-text-stroke: 0.35px currentColor; }
.pv span { padding-top: 2px; }
.sel { width: 222px; background: #999; padding-left: 17px; }
.sel span { margin-left: 16px; }
.p2 { padding-left: 19px; width: 256px; } .p2 span { margin-left: 16px; }
.p3 { padding-left: 18px; width: 169px; } .p3 span { margin-left: 18px; }
.p4 { padding-left: 18px; } .p4 span { margin-left: 18px; }
.controls { display: flex; height: 85px; align-items: flex-start; justify-content: flex-end; padding: 21px 123px 0 0; }
.select { width: 137px; height: 44px; border: 1px solid #605e5c; border-radius: 2px; display: flex; align-items: center; padding-left: 16px; font-size: 18px; }
.select span { width: 80px; margin-right: 13px; }
.toggle { width: 55px; height: 27px; border: 1px solid #605e5c; border-radius: 14px; margin: 6px 0 0 21px; padding: 4px; }
.toggle i { display: block; width: 17px; height: 17px; border-radius: 50%; background: #605e5c; }
.optlabel { margin-left: 22px; width: 167px; font-size: 18px; line-height: 42px; font-weight: 600; }
.chart { font-size: 18px; fill: #75777f; }
.ylab { text-anchor: end; letter-spacing: -0.6px; } .xlab { text-anchor: middle; }

.jobs { margin-top: 14px; height: 140px; }
.jobtitle { display: flex; align-items: center; height: 62px; padding-left: 35px; font-size: 23.500px; }
.jobtitle svg { margin-top: -2px; }
.jobtitle span { margin-left: 30px; padding-top: 1px; -webkit-text-stroke: 0.4px currentColor; }
.jobbar { display: flex; padding: 11px 69px 0 69px; }
.jobbar span { padding-top: 2px; }
.filter { width: 129px; gap: 11px; }
.searchbox { width: 550px; height: 44px; border: 1px solid #605e5c; border-radius: 2px; display: flex; align-items: center; padding-left: 16px; font-size: 17.800px; color: #605e5c; }
.searchbox span { margin-left: 10px; }
.go { width: 115px; background: #0078d4; border-color: #0078d4; color: #fff; font-weight: 700; font-size: 17.200px; }
.addrem { margin-left: auto; width: 249px; letter-spacing: 0.18px; }
.off { background: #f3f2f1; border-color: #f3f2f1; color: #a19f9d; }
.compare { width: 136px; margin: 0 14px; }
.tb { width: 207px; justify-content: flex-start; padding-left: 28px; letter-spacing: -0.35px; }
.tb i { width: 1px; height: 22px; background: #c8c6c4; margin: 0 12px 0 27px; }
.scroll { width: 21px; display: flex; flex-direction: column; align-items: center; }
.scroll i { width: 17px; height: 499px; background: #c1c1c1; }
.scroll .dn { margin-top: auto; }

/* Taskbar */
.taskbar { height: 60px; flex: none; border-top: 1px solid #a8aab0; background: linear-gradient(90deg, #d9dbe0 0, #d4dbe5 25%, #d5dbe4 50%, #d9dadf 75%, #dad9de 100%); display: flex; align-items: center; font-size: 14px; color: #1b1b1b; }
.weather { margin: -4px 0 0 25px; }
.wtext { margin: -2px 0 0 9px; width: 100px; display: flex; flex-direction: column; line-height: 20px; }
.dim { color: #55575b; }
.win { margin-left: 338px; }
.tsearch { margin: -1px 0 0 18px; width: 273px; height: 39px; border-radius: 20px; background: #f1f3f8; border: 1px solid #c5cbd5; display: flex; align-items: center; padding-left: 13px; font-size: 16px; color: #5a5c60; }
.tsearch span { margin-left: 12px; }
.illus { margin: 0 6px 0 auto; }
.apps { display: flex; margin-left: 3px; }
.app { width: 55px; height: 48px; display: grid; place-items: center; position: relative; }
.app.on::before { content: ""; grid-area: 1 / 1; width: 44px; height: 48px; background: #eceef3; border: 1px solid #c9ced6; border-radius: 5px; box-shadow: 3px 0 0 -1px #e7e9ee; }
.app.on svg { grid-area: 1 / 1; z-index: 1; }
.app u { position: absolute; bottom: 0; left: 23px; width: 8px; height: 4px; border-radius: 2px; background: #7b7d81; }
.app u.wide { left: 17px; width: 20px; background: #0078d4; z-index: 1; }
.app small { position: absolute; left: 30px; top: 8px; width: 19px; height: 14px; border-radius: 5px; background: #84888c; color: #fff; font-size: 11px; line-height: 14px; text-align: center; }
.app strong { position: absolute; left: 29px; top: 2px; width: 20px; height: 20px; border-radius: 50%; background: #0078d4; color: #fff; font-size: 13px; font-weight: 400; line-height: 20px; text-align: center; }
.word { display: grid; }
.word > * { grid-area: 1 / 1; }
.word b { z-index: 1; color: #fff; font-size: 13px; line-height: 28px; padding-left: 2px; }
.tray { display: flex; align-items: center; margin-left: auto; padding-right: 27px; }
.t2 { margin-left: 23px; }
.lang { width: 28px; margin-left: 24px; display: flex; flex-direction: column; align-items: center; line-height: 20px; }
.t3 { margin-left: 22px; } .t4 { margin-left: 9px; } .t5 { margin-left: 9px; }
.clock { width: 77px; margin: -2px 0 0 20px; display: flex; flex-direction: column; align-items: flex-end; line-height: 20px; }
.date { font-size: 14.700px; }
.bell { margin-left: 12px; }
```
